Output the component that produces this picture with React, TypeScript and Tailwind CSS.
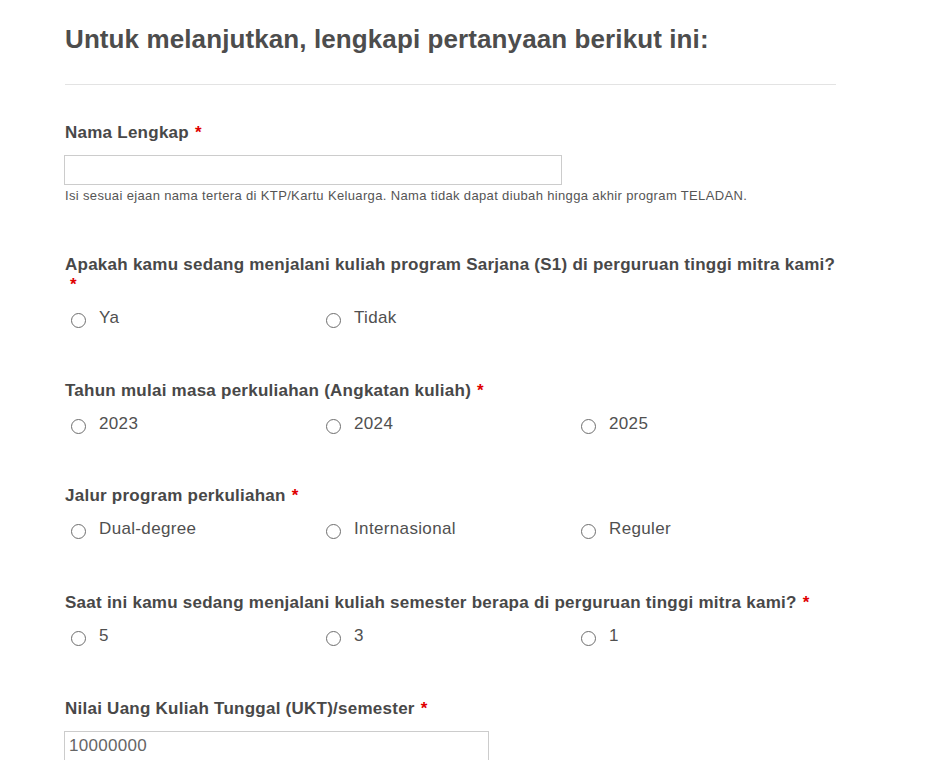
const font = { fontFamily: '"Liberation Sans", Arial, sans-serif' };

function Req() {
  return <span className="ml-[6px] text-[#e00000]">*</span>;
}

function Radio({ label }: { label: string }) {
  return (
    <label className="flex w-[255px] items-center">
      <span className="ml-[6px] mt-[4px] h-[15px] w-[15px] shrink-0 rounded-full border border-[#6e6e6e] bg-white" />
      <span className="ml-[13px] text-[17px] leading-[24px] tracking-[0.35px] text-[#505050]">{label}</span>
    </label>
  );
}

function Question({
  title,
  options,
  wrapStar,
  className,
}: {
  title: string;
  options: string[];
  wrapStar?: boolean;
  className?: string;
}) {
  return (
    <div className={className}>
      <div className="text-[17px] font-bold leading-[20px] tracking-[0.25px] text-[#484848]">
        {wrapStar ? (
          <>
            <span className="whitespace-nowrap">{title}</span>
            <br />
            <span className="ml-[5px] text-[#e00000]">*</span>
          </>
        ) : (
          <>
            {title}
            <Req />
          </>
        )}
      </div>
      <div className="mt-[11px] flex">
        {options.map((o) => (
          <Radio key={o} label={o} />
        ))}
      </div>
    </div>
  );
}

export default function App() {
  return (
    <div className="min-h-screen bg-white" style={font}>
      <div className="ml-[65px] w-[771px] pt-[24px]">
        <h1 className="text-[26px] font-bold leading-[30px] tracking-[0.1px] text-[#4d4d4d]">
          Untuk melanjutkan, lengkapi pertanyaan berikut ini:
        </h1>
        <div className="mt-[30px] border-t border-[#e3e3e3]" />

        <div className="mt-[38px]">
          <div className="text-[17px] font-bold leading-[20px] tracking-[0.25px] text-[#484848]">
            Nama Lengkap
            <Req />
          </div>
          <input
            type="text"
            className="ml-[-1px] mt-[12px] block h-[30px] w-[498px] border border-[#cccccc] bg-white px-[5px] text-[17px] outline-none"
          />
          <p className="mt-[3px] text-[13px] leading-[16px] tracking-[0.35px] text-[#555555]">
            Isi sesuai ejaan nama tertera di KTP/Kartu Keluarga. Nama tidak dapat diubah hingga akhir program TELADAN.
          </p>
        </div>

        <Question
          className="mt-[51px]"
          title="Apakah kamu sedang menjalani kuliah program Sarjana (S1) di perguruan tinggi mitra kami?"
          options={['Ya', 'Tidak']}
          wrapStar
        />
        <Question
          className="mt-[51px]"
          title="Tahun mulai masa perkuliahan (Angkatan kuliah)"
          options={['2023', '2024', '2025']}
        />
        <Question
          className="mt-[50px]"
          title="Jalur program perkuliahan"
          options={['Dual-degree', 'Internasional', 'Reguler']}
        />
        <Question
          className="mt-[52px]"
          title="Saat ini kamu sedang menjalani kuliah semester berapa di perguruan tinggi mitra kami?"
          options={['5', '3', '1']}
        />

        <div className="mt-[51px]">
          <div className="text-[17px] font-bold leading-[20px] tracking-[0.25px] text-[#484848]">
            Nilai Uang Kuliah Tunggal (UKT)/semester
            <Req />
          </div>
          <input
            type="text"
            defaultValue="10000000"
            className="ml-[-1px] mt-[12px] block h-[30px] w-[425px] border border-[#cccccc] bg-white px-[4px] text-[17px] tracking-[0.3px] text-[#666666] outline-none"
          />
        </div>
      </div>
    </div>
  );
}
